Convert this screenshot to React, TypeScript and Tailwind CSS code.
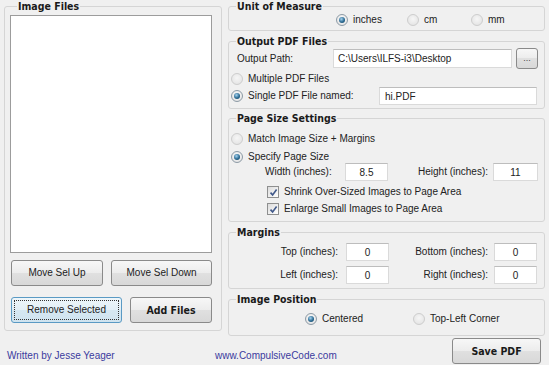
import React from "react";

const titleFont = "font-['DejaVu_Sans_Condensed','DejaVu_Sans',sans-serif] font-bold text-[10.5px]";

function GroupBox({ title, className, children }: { title: string; className?: string; children?: React.ReactNode }) {
  return (
    <fieldset className={"rounded-[3px] border border-[#d5d5d5] " + (className ?? "")}>
      <legend className={"ml-[7px] px-[1px] leading-[12px] text-[#1a1a1a] " + titleFont}>{title}</legend>
      {children}
    </fieldset>
  );
}

function Radio({ checked, label, className }: { checked?: boolean; label: string; className?: string }) {
  return (
    <div className={"flex items-center gap-[5px] " + (className ?? "")}>
      <span
        className={
          "flex h-[12px] w-[12px] shrink-0 items-center justify-center rounded-full border " +
          (checked
            ? "border-[#8d9ba6] bg-[radial-gradient(circle_at_50%_40%,#ffffff,#dcdcdc)]"
            : "border-[#cdcdcd] bg-[radial-gradient(circle_at_50%_40%,#f6f6f6,#e0e0e0)]")
        }
      >
        {checked && (
          <span className="h-[6px] w-[6px] rounded-full bg-[radial-gradient(circle_at_40%_35%,#a6d4f0_0%,#2b6a92_55%,#123f5c_100%)]" />
        )}
      </span>
      <span>{label}</span>
    </div>
  );
}

function Check({ label }: { label: string }) {
  return (
    <div className="flex items-center gap-[5px]">
      <span className="flex h-[12px] w-[12px] shrink-0 items-center justify-center border border-[#8e8f8f] bg-[linear-gradient(135deg,#dcdcdc,#ffffff)]">
        <svg width="9" height="9" viewBox="0 0 9 9">
          <path d="M1.5 4.6 L3.6 6.9 L7.6 1.6" fill="none" stroke="#41598a" strokeWidth="1.6" />
        </svg>
      </span>
      <span>{label}</span>
    </div>
  );
}

function TextBox({ value, className }: { value: string; className?: string }) {
  return (
    <input
      readOnly
      value={value}
      className={"border border-[#dadada] border-t-[#bdbdbd] bg-white outline-none " + (className ?? "")}
    />
  );
}

function WinButton({
  children,
  bold,
  focused,
  className,
}: {
  children: React.ReactNode;
  bold?: boolean;
  focused?: boolean;
  className?: string;
}) {
  return (
    <button
      className={
        "flex items-center justify-center rounded-[3px] border p-[2px] " +
        (focused
          ? "border-[#5a9ac4] bg-[linear-gradient(#eef6fa_0%,#e3eff6_50%,#d6e8f2_50%,#cfe3ef_100%)]"
          : "border-[#8a8a8a] bg-[linear-gradient(#f7f7f7_0%,#ececec_50%,#e0e0e0_50%,#d8d8d8_100%)]") +
        " " +
        (bold ? titleFont + " text-[#1a1a1a]" : "") +
        " " +
        (className ?? "")
      }
    >
      <span
        className={
          "flex h-full w-full items-center justify-center " +
          (focused ? "border border-dotted border-[#333]" : "")
        }
      >
        {children}
      </span>
    </button>
  );
}

export default function App() {
  return (
    <div className="h-[365px] w-[549px] overflow-hidden bg-[#f0f0f0] font-['Liberation_Sans',Arial,sans-serif] text-[10px] leading-[12px] text-[#222]">
      <div className="flex h-[337px]">
        {/* left: image list */}
        <div className="w-[228px] pl-[4px] pr-[6px]">
          <GroupBox title="Image Files" className="h-[331px] px-[5px]">
            <div className="mt-[3px] h-[238px] w-[202px] border border-[#9c9c9c] bg-white" />
            <div className="mt-[7px] flex gap-[8px] pl-[1px]">
              <WinButton className="h-[26px] w-[92px]">Move Sel Up</WinButton>
              <WinButton className="h-[26px] w-[101px]">Move Sel Down</WinButton>
            </div>
            <div className="mt-[11px] flex gap-[8px] pl-[1px]">
              <WinButton focused className="h-[26px] w-[111px]">
                Remove Selected
              </WinButton>
              <WinButton bold className="h-[26px] w-[82px]">
                Add Files
              </WinButton>
            </div>
          </GroupBox>
        </div>

        {/* right: settings */}
        <div className="flex flex-1 flex-col pr-[4px]">
          <GroupBox title="Unit of Measure" className="h-[31px]">
            <div className="mt-[1px] flex h-[14px] items-center pl-[107px]">
              <Radio checked label="inches" className="w-[71px]" />
              <Radio label="cm" className="w-[64px]" />
              <Radio label="mm" />
            </div>
          </GroupBox>

          <GroupBox title="Output PDF Files" className="mt-[4px] h-[74px]">
            <div className="mt-[1px] flex h-[21px] items-center pl-[8px]">
              <span className="w-[96px]">Output Path:</span>
              <TextBox value="C:\Users\ILFS-i3\Desktop" className="h-[19px] w-[179px] pl-[4px]" />
              <WinButton className="ml-[4px] h-[21px] w-[22px] text-[9px] leading-[9px] text-[#444]">...</WinButton>
            </div>
            <div className="mt-[3px] flex h-[14px] items-center pl-[2px]">
              <Radio label="Multiple PDF Files" />
            </div>
            <div className="mt-[1px] flex h-[18px] items-center pl-[2px]">
              <Radio checked label="Single PDF File named:" className="w-[148px]" />
              <TextBox value="hi.PDF" className="h-[18px] w-[158px] pl-[5px]" />
            </div>
          </GroupBox>

          <GroupBox title="Page Size Settings" className="mt-[3px] h-[110px]">
            <div className="mt-[8px] flex h-[14px] items-center pl-[2px]">
              <Radio label="Match Image Size + Margins" />
            </div>
            <div className="mt-[4px] flex h-[13px] items-center pl-[2px]">
              <Radio checked label="Specify Page Size" />
            </div>
            <div className="flex h-[18px] items-center pl-[36px]">
              <span className="w-[80px]">Width (inches):</span>
              <TextBox value="8.5" className="h-[18px] w-[43px] text-center" />
              <span className="ml-[30px] w-[75px]">Height (inches):</span>
              <TextBox value="11" className="h-[18px] w-[45px] text-center" />
            </div>
            <div className="mt-[4px] flex h-[14px] items-center pl-[38px]">
              <Check label="Shrink Over-Sized Images to Page Area" />
            </div>
            <div className="mt-[3px] flex h-[14px] items-center pl-[38px]">
              <Check label="Enlarge Small Images to Page Area" />
            </div>
          </GroupBox>

          <GroupBox title="Margins" className="mt-[4px] h-[63px]">
            <div className="mt-[5px] flex h-[18px] items-center">
              <span className="w-[117px] pr-[8px] text-right">Top (inches):</span>
              <TextBox value="0" className="h-[18px] w-[43px] text-center" />
              <span className="w-[105px] pr-[6px] text-right">Bottom (inches):</span>
              <TextBox value="0" className="h-[18px] w-[43px] text-center" />
            </div>
            <div className="mt-[5px] flex h-[18px] items-center">
              <span className="w-[117px] pr-[8px] text-right">Left (inches):</span>
              <TextBox value="0" className="h-[18px] w-[43px] text-center" />
              <span className="w-[105px] pr-[6px] text-right">Right (inches):</span>
              <TextBox value="0" className="h-[18px] w-[43px] text-center" />
            </div>
          </GroupBox>

          <GroupBox title="Image Position" className="mt-[4px] h-[43px]">
            <div className="mt-[7px] flex h-[14px] items-center pl-[76px]">
              <Radio checked label="Centered" className="w-[108px]" />
              <Radio label="Top-Left Corner" />
            </div>
          </GroupBox>
        </div>
      </div>

      {/* footer */}
      <div className="flex h-[28px] text-[#3b3b9e]">
        <span className="ml-[7px] mt-[13px] w-[208px]">Written by Jesse Yeager</span>
        <span className="mt-[13px]">www.CompulsiveCode.com</span>
        <WinButton bold className="ml-auto mr-[8px] mt-[1px] h-[26px] w-[89px]">
          Save PDF
        </WinButton>
      </div>
    </div>
  );
}
